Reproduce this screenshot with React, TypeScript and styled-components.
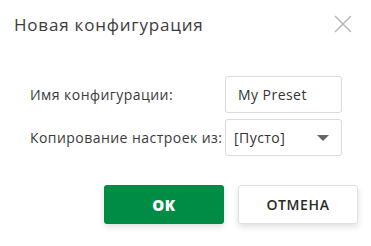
import styled, { createGlobalStyle } from "styled-components";

const GlobalStyle = createGlobalStyle`
  html, body {
    margin: 0;
    padding: 0;
    background: #fff;
  }
  body {
    font-family: "Open Sans", "Noto Sans", sans-serif;
  }
`;

const Dialog = styled.div`
  width: 371px;
  height: 246px;
  box-sizing: border-box;
  background: #fff;
  display: flex;
  flex-direction: column;
`;

const Header = styled.div`
  display: flex;
  align-items: center;
  justify-content: space-between;
  padding: 9px 19px 0 14px;
  height: 30px;
`;

const Title = styled.div`
  font-size: 17px;
  color: #3c3c3c;
  letter-spacing: 0.8px;
`;

const CloseBtn = styled.button`
  border: none;
  background: none;
  padding: 0;
  width: 18px;
  height: 18px;
  cursor: pointer;
  display: flex;
  svg {
    width: 18px;
    height: 18px;
  }
`;

const Form = styled.div`
  display: grid;
  grid-template-columns: 195px 117px;
  row-gap: 6px;
  padding: 37px 0 0 30px;
  align-items: center;
`;

const Label = styled.label`
  font-size: 14px;
  color: #3a3a3a;
  letter-spacing: 0.45px;
`;

const Field = styled.div<{ $pad?: number }>`
  box-sizing: border-box;
  height: 37px;
  border: 1px solid #dcdcdc;
  border-radius: 3px;
  display: flex;
  align-items: center;
  justify-content: space-between;
  padding: 0 12px 0 ${(p) => p.$pad ?? 12}px;
  font-size: 14px;
  color: #333;
  letter-spacing: 0.45px;
`;

const Caret = styled.span`
  width: 0;
  height: 0;
  border-left: 6px solid transparent;
  border-right: 6px solid transparent;
  border-top: 6px solid #666;
`;

const Footer = styled.div`
  display: flex;
  justify-content: flex-end;
  gap: 14px;
  padding: 29px 13px 0 0;
`;

const Button = styled.button<{ $primary?: boolean }>`
  width: 120px;
  height: 39px;
  box-sizing: border-box;
  border-radius: 3px;
  font-family: inherit;
  font-size: ${(p) => (p.$primary ? 15 : 14)}px;
  letter-spacing: 0.6px;
  cursor: pointer;
  border: ${(p) => (p.$primary ? "none" : "1px solid #e0e0e0")};
  background: ${(p) => (p.$primary ? "#008c45" : "#fff")};
  color: ${(p) => (p.$primary ? "#fff" : "#2a2a2a")};
  font-weight: ${(p) => (p.$primary ? 800 : 600)};
  box-shadow: 0 3px 6px rgba(0, 0, 0, 0.12);
`;

const App = () => {
  return (
    <>
      <GlobalStyle />
      <Dialog>
        <Header>
          <Title>Новая конфигурация</Title>
          <CloseBtn aria-label="close">
            <svg viewBox="0 0 18 18" fill="none">
              <path d="M1 1L17 17M17 1L1 17" stroke="#b5b5b5" strokeWidth="1.4" />
            </svg>
          </CloseBtn>
        </Header>
        <Form>
          <Label>Имя конфигурации:</Label>
          <Field>My Preset</Field>
          <Label>Копирование настроек из:</Label>
          <Field $pad={8}>
            [Пусто]
            <Caret />
          </Field>
        </Form>
        <Footer>
          <Button $primary>OK</Button>
          <Button>ОТМЕНА</Button>
        </Footer>
      </Dialog>
    </>
  );
};

export default App;
